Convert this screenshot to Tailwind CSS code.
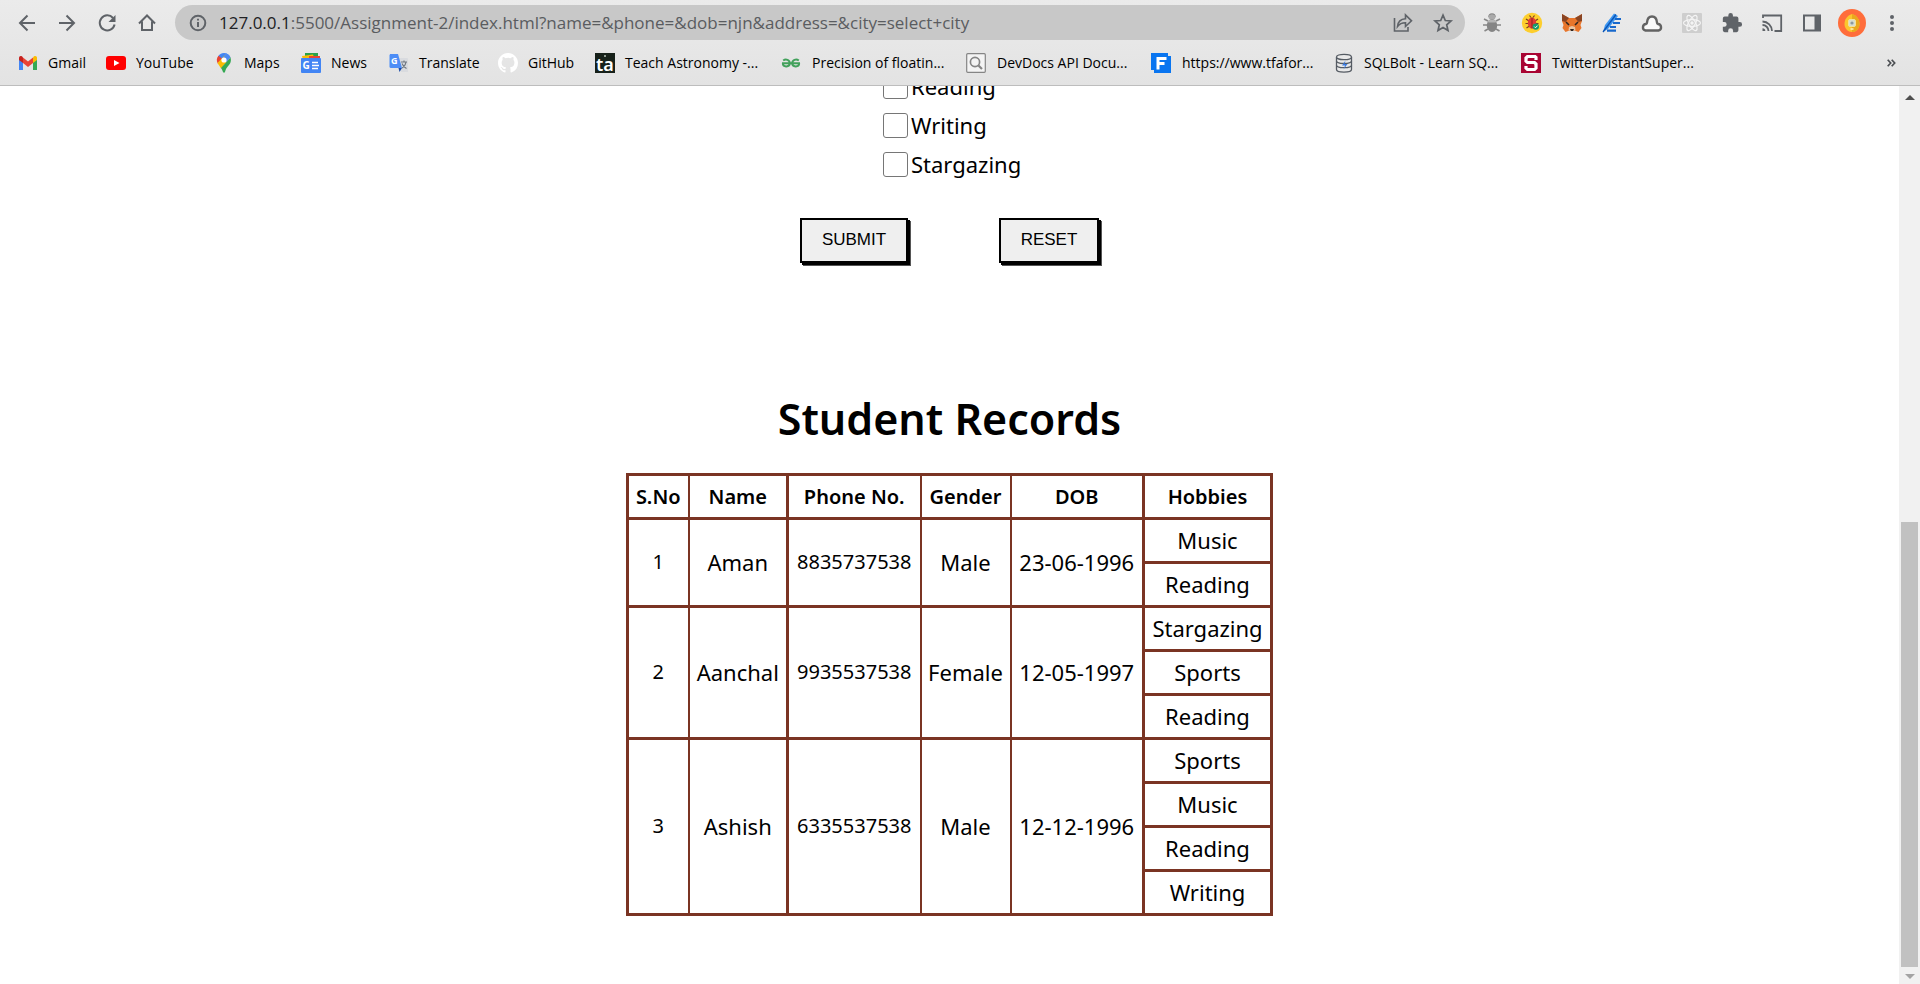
<!DOCTYPE html>
<html lang="en">
<head>
<meta charset="utf-8">
<title>Student Records</title>
<script src="https://cdn.jsdelivr.net/npm/@tailwindcss/browser@4"></script>
</head>
<body class="flex h-screen flex-col overflow-hidden bg-white font-['Open_Sans',sans-serif] text-black">

<header class="shrink-0 border-b border-[#bdbdbd] bg-linear-to-b from-[#ebebeb] to-[#e3e3e3]">
  <!-- Toolbar -->
  <div class="flex h-[45px] items-center pr-2 pl-[7px] text-[#5f6368]">
    <button aria-label="Back" class="flex w-10 justify-center"><svg width="24" height="24" viewBox="0 0 24 24" fill="none" stroke="currentColor" stroke-width="2"><path d="M20 12H5M12.500 4.500L5 12l7.500 7.500"/></svg></button>
    <button aria-label="Forward" class="flex w-10 justify-center"><svg width="24" height="24" viewBox="0 0 24 24" fill="none" stroke="currentColor" stroke-width="2"><path d="M4 12h15M11.500 4.500L19 12l-7.500 7.500"/></svg></button>
    <button aria-label="Reload" class="flex w-10 justify-center"><svg width="24" height="24" viewBox="0 0 24 24" fill="none" stroke="currentColor" stroke-width="2"><path d="M18 7a7.500 7.500 0 1 0 1.600 6.500"/><path d="M20.500 4v7h-7z" fill="currentColor" stroke="none"/></svg></button>
    <button aria-label="Home" class="flex w-10 justify-center"><svg width="24" height="24" viewBox="0 0 24 24" fill="none" stroke="currentColor" stroke-width="2"><path d="M4 12.500l8-8 8 8M7 10.500V19h10v-8.500"/></svg></button>
    <div class="ml-2 flex h-[35px] min-w-0 flex-1 items-center rounded-full bg-[#c8c8c8] pr-0.5 pl-3">
      <svg class="shrink-0" width="22" height="22" viewBox="0 0 22 22" fill="none" stroke="currentColor" stroke-width="2"><circle cx="11" cy="11" r="7.300"/><path d="M11 10v5M11 6.700v1.800"/></svg>
      <div class="ml-2.5 min-w-0 flex-1 truncate text-[17px] leading-6 text-[#5a5c60]"><span class="text-[#202124]">127.0.0.1</span>:5500/Assignment-2/index.html?name=&amp;phone=&amp;dob=njn&amp;address=&amp;city=select+city</div>
      <button aria-label="Share" class="flex w-10 justify-center"><svg width="22" height="22" viewBox="0 0 22 22" fill="none" stroke="currentColor" stroke-width="1.600"><path d="M2.500 6v13h13.500v-4"/><path d="M5.500 14.500c.5-5 3.500-7.500 8-7.700V3l6 5.800-6 5.700v-3.700c-3.500 0-6 1-8 3.700z"/></svg></button>
      <button aria-label="Bookmark this page" class="flex w-10 justify-center"><svg width="22" height="22" viewBox="0 0 22 22" fill="none" stroke="currentColor" stroke-width="1.700"><path d="M11 3.200l2.300 5.300 5.700.5-4.300 3.800 1.300 5.700-5-3-5 3 1.300-5.700L3 9l5.700-.5z"/></svg></button>
    </div>
    <div class="ml-[7px] flex items-center">
      <button aria-label="Debugger" class="flex w-10 justify-center"><svg width="20" height="22" viewBox="0 0 20 22"><path d="M7 5a3 3 0 0 1 6 0M6 9L2 7M14 9l4-2M5 13H1M15 13h4M6 17l-3.500 2M14 17l3.500 2" stroke="#888" stroke-width="1.600" fill="none"/><ellipse cx="10" cy="5" rx="3.600" ry="2.500" fill="#aaa"/><ellipse cx="10" cy="13.500" rx="5.200" ry="6.500" fill="#858585"/><path d="M5.500 9q4.500-3 9 0l-1 1.500h-7z" fill="#b5b5b5"/></svg></button>
      <button aria-label="Bug report" class="flex w-10 justify-center"><svg width="22" height="22" viewBox="0 0 22 22"><circle cx="11" cy="11" r="10.200" fill="#fdce2d"/><path d="M5 7l3 2M4.500 11.500H8M5.500 16l3-2M17 7l-3 2M17.500 11.500H14M8.500 3.500l1.500 2M13.500 3.500l-1.500 2" stroke="#7b3b22" stroke-width="1.200"/><ellipse cx="11" cy="11" rx="4.200" ry="5.500" fill="#e23c35"/><path d="M11 5.500v11" stroke="#8d211d"/><circle cx="14.800" cy="14.600" r="3.200" fill="#159b6c"/><path d="M13.300 14.600l1.200 1.200 2-2.200" stroke="#fff" fill="none"/></svg></button>
      <button aria-label="Fox wallet" class="flex w-10 justify-center"><svg width="22" height="20" viewBox="0 0 22 20"><path d="M1 1l7 4h6l7-4v7l-1.500 4 1 3-3 4-4-1.500h-5L4.500 19l-3-4 1-3L1 8z" fill="#e8762c"/><path d="M1 1l7 4-3.500 4L1 8zM21 1l-7 4 3.500 4L21 8z" fill="#8a4523"/><path d="M5 9l3 3M17 9l-3 3" stroke="#2f2622" stroke-width="1.600"/><path d="M8 14l3-1 3 1 .5 3.500h-7z" fill="#e8c4a4"/><path d="M9 16h4l-1 2h-2z" fill="#2f2622"/></svg></button>
      <button aria-label="Feather" class="flex w-10 justify-center"><svg width="22" height="22" viewBox="0 0 22 22"><path d="M2 20l2-7L13 1.500l4 2.500L7 17z" fill="#3d97f2"/><path d="M2 20L15 2.500" stroke="#0d55b5" stroke-width="1.300"/><path d="M14 7h6M12 11h7M9 15h6M6 18.700h9" stroke="#1768cc" stroke-width="2.200"/></svg></button>
      <button aria-label="Cloud" class="flex w-10 justify-center"><svg width="24" height="24" viewBox="0 0 24 24"><path d="M5.500 19.500a3.300 3.300 0 0 1 .5-6.500c.6-.3.900-.8 1-1.500C7.300 8 9 5.500 12 5.500s4.700 2.500 5 6c.1.700.4 1.200 1 1.500a3.300 3.300 0 0 1 .5 6.500z" fill="#fafafa" stroke="#636363" stroke-width="2.400"/></svg></button>
      <button aria-label="React tools" class="flex w-10 justify-center"><svg width="20" height="20" viewBox="0 0 20 20" fill="none" stroke="#f4f4f4" stroke-width="1.200"><rect width="20" height="20" rx="1" fill="#cecece" stroke="none"/><ellipse cx="10" cy="10" rx="8.500" ry="3.300"/><ellipse cx="10" cy="10" rx="8.500" ry="3.300" transform="rotate(60 10 10)"/><ellipse cx="10" cy="10" rx="8.500" ry="3.300" transform="rotate(120 10 10)"/><circle cx="10" cy="10" r="1.700" fill="#f4f4f4" stroke="none"/></svg></button>
      <button aria-label="Extensions" class="flex w-10 justify-center"><svg width="22" height="22" viewBox="0 0 24 24" fill="currentColor"><path d="M20.500 11H19V7a2 2 0 0 0-2-2h-4V3.500a2.500 2.500 0 0 0-5 0V5H4a2 2 0 0 0-2 2v3.800h1.500a2.700 2.700 0 0 1 0 5.400H2V20a2 2 0 0 0 2 2h3.800v-1.500a2.700 2.700 0 0 1 5.400 0V22H17a2 2 0 0 0 2-2v-4h1.500a2.500 2.500 0 0 0 0-5z"/></svg></button>
      <button aria-label="Cast" class="flex w-10 justify-center"><svg width="22" height="22" viewBox="0 0 22 22" fill="none" stroke="currentColor" stroke-width="1.800"><path d="M2 6V3.500h18.200v15.500H13.500M1.500 9.500A9.500 9.500 0 0 1 11 19M1.500 13A6 6 0 0 1 7.500 19"/><path d="M1.500 16.300a2.800 2.800 0 0 1 2.800 2.800H1.500z" fill="currentColor" stroke="none"/></svg></button>
      <button aria-label="Side panel" class="flex w-10 justify-center"><svg width="20" height="20" viewBox="0 0 20 20"><path d="M2 2.500h16v15H2z" fill="none" stroke="currentColor" stroke-width="2"/><path d="M12.500 2H19v16h-6.500z" fill="currentColor"/></svg></button>
      <button aria-label="Profile" class="flex w-10 justify-center"><svg width="28" height="28" viewBox="0 0 28 28"><circle cx="14" cy="14" r="14" fill="#ff6d3b"/><path d="M14 5c5 1.500 7.500 5.500 7.500 10 0 4.500-3.500 8-7.500 8s-7.500-3.500-7.500-8c0-4.500 2.500-8.500 7.500-10z" fill="#fbc52d"/><path d="M14 5v18c4 0 7.500-3.500 7.500-8 0-4.500-2.500-8.500-7.500-10z" fill="#e9a81e"/><rect x="10.500" y="10.500" width="7" height="7" rx="1.500" fill="#d7ddd2" stroke="#f3e29a"/><circle cx="14" cy="14" r="1.600" fill="#8c9aa0"/><path d="M12.500 20h3" stroke="#fff3b5" stroke-width="1.500"/></svg></button>
      <button aria-label="Menu" class="flex w-10 justify-center"><svg width="20" height="20" viewBox="0 0 20 20" fill="currentColor"><circle cx="10" cy="4" r="2"/><circle cx="10" cy="10" r="2"/><circle cx="10" cy="16" r="2"/></svg></button>
    </div>
  </div>

  <!-- Bookmarks bar -->
  <nav aria-label="Bookmarks" class="flex h-10 items-center pb-1 pl-[18px] text-sm leading-5 whitespace-nowrap">
    <a href="#" class="flex w-[88px] shrink-0 items-center gap-2.5"><svg width="20" height="20" viewBox="0 0 20 20"><path d="M1 4.500V17h4V8z" fill="#4285f4"/><path d="M15 8v9h4V4.500z" fill="#34a853"/><path d="M15 4.500V10l4-3V5c0-2-2.200-3-4-.5z" fill="#fbbc04"/><path d="M5 4.500V10L1 7V5c0-2 2.200-3 4-.5z" fill="#c5221f"/><path d="M5 4.500l5 4 5-4V10l-5 4-5-4z" fill="#ea4335"/></svg>Gmail</a>
    <a href="#" class="flex w-[108px] shrink-0 items-center gap-2.5"><svg width="20" height="20" viewBox="0 0 20 20"><rect y="3" width="20" height="14" rx="3" fill="red"/><path d="M8 7l5.500 3L8 13z" fill="#fff"/></svg>YouTube</a>
    <a href="#" class="flex w-[87px] shrink-0 items-center gap-2.5"><svg width="20" height="20" viewBox="0 0 20 20"><path d="M10 0a7 7 0 0 1 6.500 4.500L7 9 4 3.500A7 7 0 0 1 10 0z" fill="#4285f4"/><path d="M4.500 2.700L8 5.500 3.800 10.500A7 7 0 0 1 4.500 2.700z" fill="#ea4335"/><path d="M3.500 10L12 1l4.500 3.500-9.500 11z" fill="#fbbc04"/><path d="M16.500 4.500c1.500 5-1.500 7.500-3.500 10-1.500 2-1.500 3-2 4.500-.5 1-1.500 1-2 0-.5-1.500-1-2.500-2-4z" fill="#34a853"/><path d="M12 .4a7 7 0 0 1 4.500 4.100l-4 4.500-3-4.500z" fill="#4c8bf5"/><circle cx="10" cy="7" r="2.600" fill="#fff"/></svg>Maps</a>
    <a href="#" class="flex w-[88px] shrink-0 items-center gap-2.5"><svg width="20" height="20" viewBox="0 0 20 20"><path d="M4 0h13v8H4z" fill="#2ba24c"/><path d="M1 3l11-1.500 2 6H2z" fill="#fbbc04"/><path d="M8 3h11v6H8z" fill="#ea4335"/><rect y="5" width="20" height="15" rx="1" fill="#4285f4"/><text x="1.500" y="16" font-family="Open Sans" font-weight="700" font-size="10" fill="#fff">G</text><path d="M11 9.500h6M11 12.500h7M11 15.500h6" stroke="#fff" stroke-width="1.400"/></svg>News</a>
    <a href="#" class="flex w-[109px] shrink-0 items-center gap-2.5"><svg width="20" height="20" viewBox="0 0 20 20"><path d="M8 5h10a1 1 0 0 1 1 1v13H12z" fill="#d9dbdf"/><path d="M1 1h8l4 14H2a1.500 1.500 0 0 1-1.500-1.500V2.500z" fill="#4d8df6"/><path d="M9.500 15H13l-2.500 4z" fill="#1b4ba8"/><text x="2" y="11" font-family="Open Sans" font-weight="700" font-size="9" fill="#fff">G</text><path d="M12 9h6M15 7.500V9M17 9c-.5 3-2 5-4 6M13 10.500c1 2.500 2.500 4 4.500 5" stroke="#6f7780" stroke-width="1.100" fill="none"/></svg>Translate</a>
    <a href="#" class="flex w-[97px] shrink-0 items-center gap-2.5"><svg width="20" height="20" viewBox="0 0 16 16" fill="#fff"><path d="M8 0C3.580 0 0 3.580 0 8c0 3.540 2.290 6.530 5.470 7.590.4.070.55-.17.55-.38v-1.490c-2.010.37-2.530-.49-2.690-.94-.09-.23-.48-.94-.82-1.130-.28-.15-.68-.52-.01-.53.63-.01 1.080.58 1.230.82.72 1.210 1.870.87 2.330.66.070-.52.28-.87.510-1.070-1.780-.2-3.640-.89-3.640-3.950 0-.87.310-1.590.82-2.150-.08-.2-.36-1.020.08-2.120 0 0 .67-.21 2.200.82a7.600 7.600 0 0 1 4 0c1.530-1.040 2.200-.82 2.200-.82.44 1.100.16 1.920.08 2.120.51.56.82 1.270.82 2.150 0 3.070-1.870 3.750-3.650 3.950.29.250.54.730.54 1.480v2.200c0 .21.150.46.55.38A8 8 0 0 0 16 8c0-4.420-3.580-8-8-8z"/></svg>GitHub</a>
    <a href="#" class="flex w-[186px] shrink-0 items-center gap-2.5"><svg width="20" height="20" viewBox="0 0 20 20"><rect width="20" height="20" fill="#17211a"/><circle cx="10" cy="3" r="1" fill="#b8c4b9"/><circle cx="4" cy="8" r=".6" fill="#879588"/><text x="1" y="18" font-family="Noto Sans" font-weight="600" font-size="18" fill="#fff">ta</text></svg>Teach Astronomy -...</a>
    <a href="#" class="flex w-[185px] shrink-0 items-center gap-[11px]"><svg width="20" height="20" viewBox="0 0 20 20" fill="none" stroke="#42a15b" stroke-width="2"><path d="M2.200 7.500C5 5.500 8.800 7 8.800 10.200c0 4-6.600 4.500-7 .3M17.800 7.500C15 5.500 11.200 7 11.200 10.200c0 4 6.600 4.500 7 .3M1 10.300h18"/></svg>Precision of floatin...</a>
    <a href="#" class="flex w-[185px] shrink-0 items-center gap-[11px]"><svg width="20" height="20" viewBox="0 0 20 20" fill="none" stroke="#858585"><rect x=".7" y=".7" width="18.600" height="18.600" rx="1" fill="#f4f4f4" stroke-width="1.200"/><circle cx="9" cy="9" r="4.600" stroke-width="1.700"/><path d="M12.500 12.500l3.500 3.500" stroke-width="2.200"/></svg>DevDocs API Docu...</a>
    <a href="#" class="flex w-[183px] shrink-0 items-center gap-[11px]"><svg width="20" height="20" viewBox="0 0 20 20"><path d="M0 0h17v3h3v17H3v-3H0z" fill="#0975f0"/><path d="M15.500 5.500H7v11M7 10.500h6.500" stroke="#fff" stroke-width="3" fill="none"/></svg>https://www.tfafor...</a>
    <a href="#" class="flex w-[187px] shrink-0 items-center gap-2.5"><svg width="20" height="20" viewBox="0 0 20 20" fill="#e9e9e9" stroke="#555b63" stroke-width="1.300"><path d="M2.500 4v12.500c0 3.500 15 3.500 15 0V4"/><ellipse cx="10" cy="4" rx="7.500" ry="2.700"/><path d="M2.500 8c0 3.300 15 3.300 15 0M2.500 12.200c0 3.300 15 3.300 15 0" fill="none"/><path d="M11.500 7.500l-3.500 5h3l-1.500 4 4-5.500h-3z" fill="#3b7be0" stroke="none"/></svg>SQLBolt - Learn SQ...</a>
    <a href="#" class="flex shrink-0 items-center gap-[11px]"><svg width="20" height="20" viewBox="0 0 20 20"><rect width="20" height="20" fill="#a90533"/><path d="M15 7V4.500L14 3.500H6.500L5 5v3l1.500 1.500h7L15 11v4l-1.500 1.500h-7L5 15v-2" stroke="#fff" stroke-width="3.200" fill="none"/></svg>TwitterDistantSuper...</a>
    <button aria-label="More bookmarks" class="mr-6 ml-auto text-[#4b4e52]"><svg width="9" height="8" viewBox="0 0 9 8" fill="none" stroke="currentColor" stroke-width="1.700"><path d="M.7.700L3.700 4l-3 3.300M4.700.700l3 3.300-3 3.300"/></svg></button>
  </nav>
</header>

<div class="flex min-h-0 flex-1">
  <!-- The page, scrolled to its end -->
  <main class="flex min-w-0 flex-1 flex-col items-center justify-end overflow-hidden pb-[68px] font-['Noto_Sans',sans-serif] text-[22px]">
    <form class="flex shrink-0 flex-col items-center">
      <div class="flex w-[133px] flex-col gap-3.5">
        <label class="flex h-[25px] items-center gap-[3px]"><input type="checkbox" name="hobby" class="size-[25px] shrink-0 appearance-none rounded-[3px] border border-[#767676] bg-white">Reading</label>
        <label class="flex h-[25px] items-center gap-[3px]"><input type="checkbox" name="hobby" class="size-[25px] shrink-0 appearance-none rounded-[3px] border border-[#767676] bg-white">Writing</label>
        <label class="flex h-[25px] items-center gap-[3px]"><input type="checkbox" name="hobby" class="size-[25px] shrink-0 appearance-none rounded-[3px] border border-[#767676] bg-white">Stargazing</label>
      </div>
      <div class="mt-[41px] flex gap-[91px] font-['Liberation_Sans',sans-serif] text-[17px] leading-5">
        <button type="submit" class="h-[45px] w-[108px] border-2 border-black bg-[#efefef] pb-0.5 shadow-[2px_2px_0_#000,3px_3px_0_#555]">SUBMIT</button>
        <button type="reset" class="h-[45px] w-[100px] border-2 border-black bg-[#efefef] pb-0.5 shadow-[2px_2px_0_#000,3px_3px_0_#555]">RESET</button>
      </div>
    </form>

    <h1 class="mt-[126px] mb-6 text-[43px] leading-[60px] font-semibold">Student Records</h1>

    <table class="w-[647px] shrink-0 table-fixed border-collapse border-3 border-[#7a3423] text-center leading-6 [&_td]:h-11 [&_td]:border-y-3 [&_td]:border-[#7a3423] [&_td]:p-0 [&_td]:pb-0.5 [&_th]:h-11 [&_th]:border-y-3 [&_th]:border-[#7a3423] [&_th]:p-0 [&_th]:text-[20px] [&_th]:font-semibold">
      <colgroup><col class="w-[61px]"><col class="w-[99px]"><col class="w-[133px]"><col class="w-[90px]"><col class="w-[133px]"><col class="w-[128px]"></colgroup>
      <thead>
        <tr><th class="border-r-2">S.No</th><th class="border-r-3">Name</th><th class="border-r-2">Phone No.</th><th class="border-r-2">Gender</th><th class="border-r-3">DOB</th><th>Hobbies</th></tr>
      </thead>
      <tbody>
        <tr><td rowspan="2" class="border-r-2 text-[20px]">1</td><td rowspan="2" class="border-r-3">Aman</td><td rowspan="2" class="border-r-2 text-[20px]">8835737538</td><td rowspan="2" class="border-r-2">Male</td><td rowspan="2" class="border-r-3">23-06-1996</td><td>Music</td></tr>
        <tr><td>Reading</td></tr>
        <tr><td rowspan="3" class="border-r-2 text-[20px]">2</td><td rowspan="3" class="border-r-3">Aanchal</td><td rowspan="3" class="border-r-2 text-[20px]">9935537538</td><td rowspan="3" class="border-r-2">Female</td><td rowspan="3" class="border-r-3">12-05-1997</td><td>Stargazing</td></tr>
        <tr><td>Sports</td></tr>
        <tr><td>Reading</td></tr>
        <tr><td rowspan="4" class="border-r-2 text-[20px]">3</td><td rowspan="4" class="border-r-3">Ashish</td><td rowspan="4" class="border-r-2 text-[20px]">6335537538</td><td rowspan="4" class="border-r-2">Male</td><td rowspan="4" class="border-r-3">12-12-1996</td><td>Sports</td></tr>
        <tr><td>Music</td></tr>
        <tr><td>Reading</td></tr>
        <tr><td>Writing</td></tr>
      </tbody>
    </table>
  </main>

  <!-- Scrollbar -->
  <div class="flex w-[21px] shrink-0 flex-col items-center bg-[#f1f1f1] pt-[9px] pb-[5px]" aria-hidden="true">
    <svg width="10" height="5" viewBox="0 0 10 5"><path d="M0 5l5-5 5 5z" fill="#505050"/></svg>
    <div class="flex-[422]"></div>
    <div class="w-[17px] flex-[445] bg-[#c1c1c1]"></div>
    <svg class="mt-[7px]" width="10" height="5" viewBox="0 0 10 5"><path d="M0 0h10L5 5z" fill="#a3a3a3"/></svg>
  </div>
</div>
</body>
</html>
